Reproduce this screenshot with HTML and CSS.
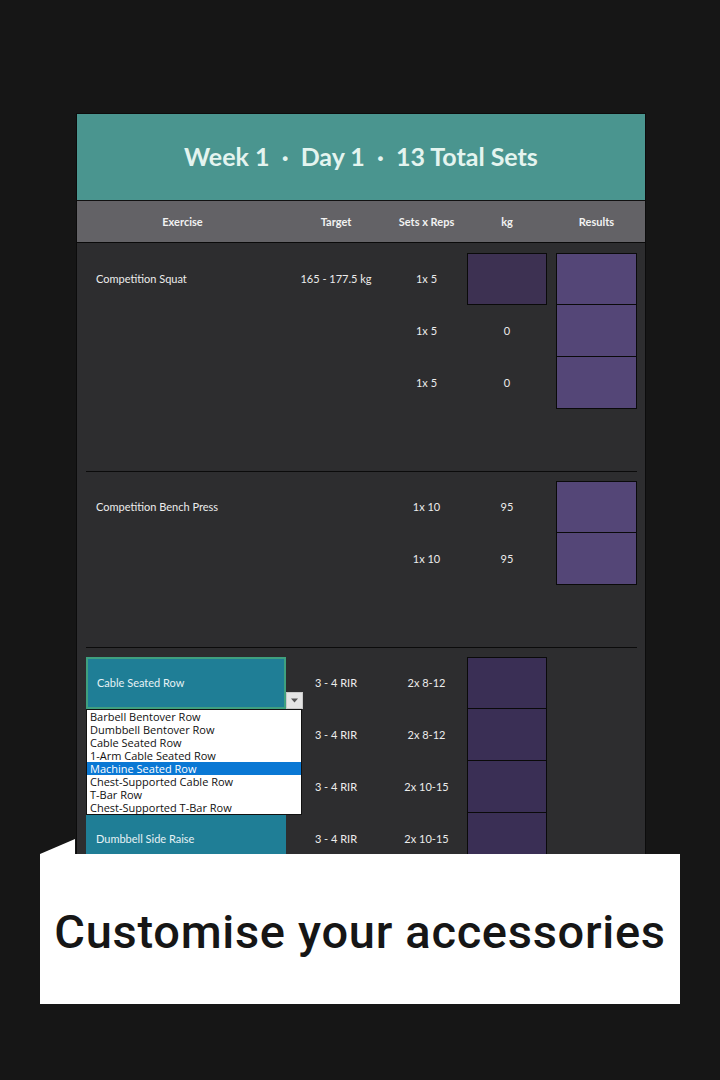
FILE: index.html
```html
<!DOCTYPE html>
<html>
<head>
<meta charset="utf-8">
<link rel="stylesheet" href="styles.css">
</head>
<body>
<div class="stage">
  <div class="panel">
    <div class="title">Week 1 &nbsp;·&nbsp; Day 1 &nbsp;·&nbsp; 13 Total Sets</div>
    <div class="cols">
      <div class="hc">Exercise</div>
      <div class="hc">Target</div>
      <div class="hc">Sets x Reps</div>
      <div class="hc">kg</div>
      <div class="hc res">Results</div>
    </div>
    <div class="body">
      <div class="section">
        <div class="row">
          <div class="ex">Competition Squat</div>
          <div class="c">165 - 177.5 kg</div>
          <div class="c">1x 5</div>
          <div class="kg"><div class="box kgbox"></div></div>
          <div class="rs"><div class="box resbox"></div></div>
        </div>
        <div class="row">
          <div class="ex"></div>
          <div class="c"></div>
          <div class="c">1x 5</div>
          <div class="c">0</div>
          <div class="rs"><div class="box resbox cont"></div></div>
        </div>
        <div class="row">
          <div class="ex"></div>
          <div class="c"></div>
          <div class="c">1x 5</div>
          <div class="c">0</div>
          <div class="rs"><div class="box resbox cont"></div></div>
        </div>
      </div>
      <div class="section">
        <div class="row">
          <div class="ex">Competition Bench Press</div>
          <div class="c"></div>
          <div class="c">1x 10</div>
          <div class="c">95</div>
          <div class="rs"><div class="box resbox"></div></div>
        </div>
        <div class="row">
          <div class="ex"></div>
          <div class="c"></div>
          <div class="c">1x 10</div>
          <div class="c">95</div>
          <div class="rs"><div class="box resbox cont"></div></div>
        </div>
      </div>
      <div class="section last">
        <div class="row">
          <div class="ex acc selected">Cable Seated Row
            <div class="ddbtn"><svg width="9" height="5" viewBox="0 0 9 5"><path d="M1 0.5 L8 0.5 L4.5 4.5 Z" fill="#555"/></svg></div>
            <ul class="ddlist">
              <li>Barbell Bentover Row</li>
              <li>Dumbbell Bentover Row</li>
              <li>Cable Seated Row</li>
              <li>1-Arm Cable Seated Row</li>
              <li class="hl">Machine Seated Row</li>
              <li>Chest-Supported Cable Row</li>
              <li>T-Bar Row</li>
              <li>Chest-Supported T-Bar Row</li>
            </ul>
          </div>
          <div class="c">3 - 4 RIR</div>
          <div class="c">2x 8-12</div>
          <div class="kg"><div class="box accbox"></div></div>
          <div class="rs"></div>
        </div>
        <div class="row">
          <div class="ex acc"></div>
          <div class="c">3 - 4 RIR</div>
          <div class="c">2x 8-12</div>
          <div class="kg"><div class="box accbox cont"></div></div>
          <div class="rs"></div>
        </div>
        <div class="row">
          <div class="ex acc"></div>
          <div class="c">3 - 4 RIR</div>
          <div class="c">2x 10-15</div>
          <div class="kg"><div class="box accbox cont"></div></div>
          <div class="rs"></div>
        </div>
        <div class="row">
          <div class="ex acc">Dumbbell Side Raise</div>
          <div class="c">3 - 4 RIR</div>
          <div class="c">2x 10-15</div>
          <div class="kg"><div class="box accbox cont"></div></div>
          <div class="rs"></div>
        </div>
      </div>
    </div>
  </div>
  <div class="caption">Customise your accessories</div>
</div>
</body>
</html>
```

FILE: styles.css
```css
* { box-sizing: border-box; }
html, body { margin: 0; padding: 0; }
body {
  background: #161616;
  width: 720px;
  height: 1080px;
  overflow: hidden;
  font-family: "Lato", "Open Sans", sans-serif;
}
.stage {
  position: relative;
  width: 720px;
  height: 1080px;
  padding-top: 113px;
}
.panel {
  margin-left: 76px;
  width: 570px;
  height: 800px;
  overflow: hidden;
  background: #2d2d2f;
  border: 1px solid #0c0c0c;
  border-bottom: 0;
}
.title {
  height: 87px;
  background: #4a958f;
  color: #e4f4ef;
  font-weight: 700;
  font-size: 25px;
  display: flex;
  align-items: center;
  justify-content: center;
  padding-bottom: 2px;
  border-bottom: 1px solid #111;
}
.cols {
  height: 42px;
  background: #636266;
  border-bottom: 1px solid #0a0a0a;
  display: grid;
  grid-template-columns: 209px 100px 81px 80px 90px;
  align-items: center;
  color: #f2f2f2;
  font-weight: 700;
  font-size: 11px;
}
.hc { text-align: center; }
.hc:first-child { padding-left: 2px; }
.hc.res { padding-left: 9px; }
.body { padding: 0 8px 0 9px; }
.section {
  padding-top: 9px;
  padding-bottom: 62px;
  border-bottom: 1px solid #0b0b0b;
}
.section:first-child { padding-top: 10px; }
.section.last { border-bottom: 0; }
.row {
  display: grid;
  grid-template-columns: 200px 100px 81px 80px 90px;
  height: 52px;
  color: #ececec;
  font-size: 11px;
  line-height: 12px;
}
.ex {
  display: flex;
  align-items: center;
  padding-left: 10px;
  position: relative;
}
.c {
  display: flex;
  align-items: center;
  justify-content: center;
}
.kg { display: flex; }
.rs { display: flex; justify-content: flex-end; }
.box {
  border: 1px solid #0a0a0a;
  height: 52px;
}
.box.cont { border-top: 0; }
.kgbox { width: 80px; background: #3d3152; }
.resbox { width: 81px; background: #544677; }
.accbox { width: 80px; background: #3a2f55; }
.acc {
  background: #1f7e96;
  border-bottom: 1px solid #1a6f85;
  color: #e6f2f5;
}
.acc.selected {
  border: 2px solid #3fa07f;
  padding-left: 9px;
}
.ddbtn {
  position: absolute;
  left: 198px;
  bottom: -2px;
  width: 17px;
  height: 17px;
  background: #e4e4e4;
  border: 1px solid #c9c9c9;
  display: flex;
  align-items: center;
  justify-content: center;
}
.ddlist {
  position: absolute;
  left: -2px;
  top: 50px;
  width: 216px;
  margin: 0;
  padding: 0;
  list-style: none;
  background: #fff;
  border: 1px solid #111;
  z-index: 2;
  font-family: "Open Sans", "Noto Sans", sans-serif;
  font-size: 11px;
  color: #111;
}
.ddlist li {
  height: 13px;
  line-height: 13px;
  padding-left: 3px;
  white-space: nowrap;
}
.ddlist li.hl {
  background: #0a78d4;
  color: #fff;
}
.caption {
  position: absolute;
  left: 40px;
  top: 854px;
  width: 640px;
  height: 150px;
  background: #ffffff;
  color: #161616;
  font-family: "Roboto", sans-serif;
  font-weight: 500;
  font-size: 47px;
  display: flex;
  align-items: center;
  justify-content: center;
  padding-top: 4px;
  letter-spacing: 0.7px;
}
.caption::before {
  content: "";
  position: absolute;
  left: 0;
  top: -15px;
  width: 0;
  height: 0;
  border-left: 35px solid transparent;
  border-bottom: 15px solid #ffffff;
}
```
